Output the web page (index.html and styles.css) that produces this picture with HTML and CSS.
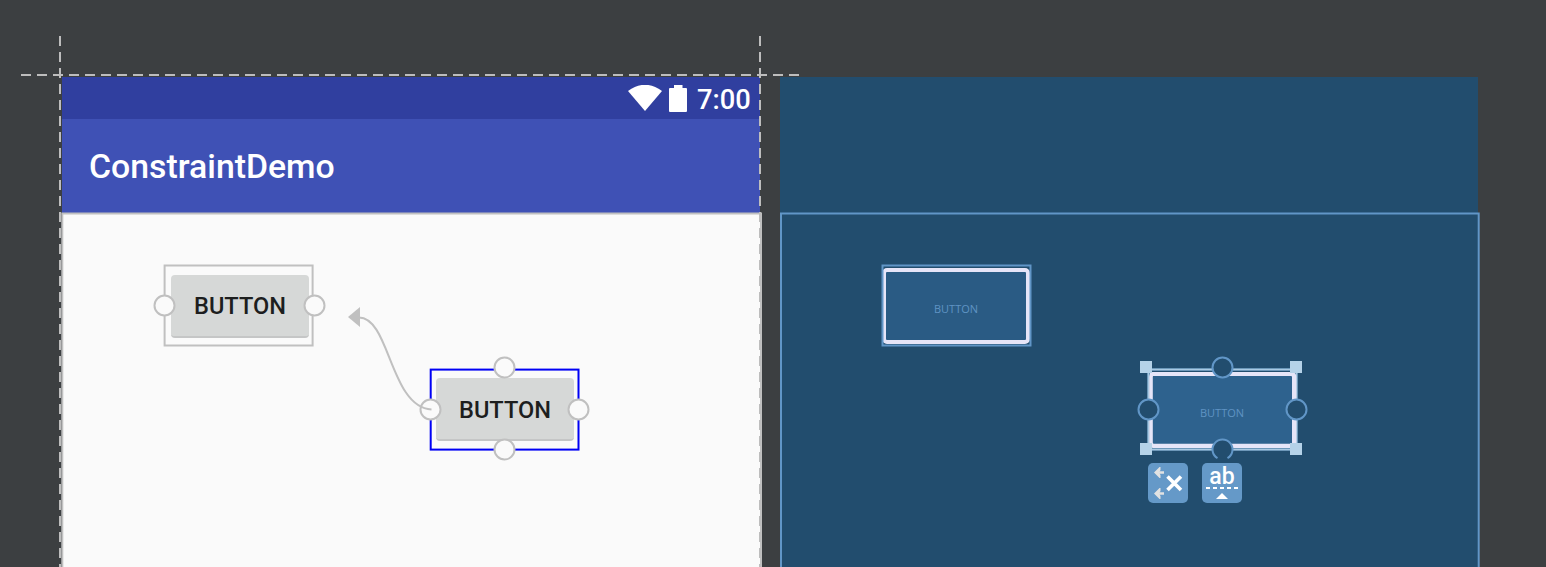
FILE: index.html
```
<!DOCTYPE html>
<html lang="en">
<head>
<meta charset="utf-8">
<title>ConstraintDemo</title>
<link rel="stylesheet" href="styles.css">
</head>
<body>
<main class="editor">
  <section class="surface design">
    <div class="status-bar">
      <svg class="wifi" width="34" height="27" viewBox="0 0 34 27"><path d="M0 6Q17-6.500 34 6L17 26Z"/></svg>
      <svg class="battery" width="18" height="27" viewBox="0 0 18 27"><path d="M5 0H13.500V3H17Q18 3 18 4V26Q18 27 17 27H1Q0 27 0 26V4Q0 3 1 3H5Z"/></svg>
      <span class="clock">7:00</span>
    </div>
    <div class="app-bar"><h1>ConstraintDemo</h1></div>
    <div class="content"></div>
    <div class="widget first">BUTTON</div>
    <div class="widget second">BUTTON</div>
  </section>
  <section class="surface blueprint">
    <div class="content"></div>
    <div class="outline first">BUTTON</div>
    <div class="outline second">BUTTON</div>
  </section>
  <svg class="overlay" width="1546" height="567" viewBox="0 0 1546 567">
    <g class="frames">
      <path class="gray" d="M62.300 567V213.400H761V567"/>
      <path class="blue" d="M781 567V213.400H1478.700V567"/>
    </g>
    <g class="guides">
      <path d="M21 75H800M60 36V567M760 36V567"/>
    </g>
    <g class="anchors">
      <rect class="gray" x="164.600" y="265.500" width="148" height="80"/>
      <circle cx="164.500" cy="305.500" r="10"/>
      <circle cx="314.500" cy="305.500" r="10"/>
      <rect class="selected" x="430.700" y="369.600" width="147.800" height="80"/>
      <circle cx="504.500" cy="367.500" r="10"/>
      <circle cx="504.500" cy="449.500" r="10"/>
      <circle cx="430.500" cy="409.500" r="10"/>
      <circle cx="578.500" cy="409.500" r="10"/>
      <path class="connector" d="M431.500 409.500C390 407 390 317.500 359 317.500"/>
      <path class="arrow" d="M348 317L360 307V327Z"/>
    </g>
    <g class="handles">
      <rect class="blue" x="882.500" y="265.500" width="148" height="80"/>
      <rect class="halo" x="1148.500" y="369.500" width="148" height="80"/>
      <rect class="core" x="1148.500" y="369.500" width="148" height="80"/>
      <rect class="body-edge" x="1151" y="373.700" width="143.500" height="71.800" rx="3"/>
      <path class="corners" d="M1140 361h12v12h-12zM1290 361h12v12h-12zM1140 443h12v12h-12zM1290 443h12v12h-12z"/>
      <circle cx="1222.500" cy="367.500" r="10"/>
      <path class="anchor-fill" d="M1217.500 458.700A10 10 0 1 1 1227.500 458.700Z"/>
      <path class="anchor-ring" d="M1217.500 458.200A10 10 0 1 1 1227.500 458.200"/>
      <circle cx="1148.500" cy="409.500" r="10"/>
      <circle cx="1296.500" cy="409.500" r="10"/>
    </g>
  </svg>
  <div class="actions">
    <button class="action" aria-label="Delete constraints">
      <svg width="40" height="40" viewBox="0 0 40 40"><g class="side"><path d="M8 9.500H16M8 30.500H16"/><path class="head" d="M6 9.500L11.500 4H12.500V7L11 9.500L12.500 12V15H11.500ZM6 30.500L11.500 25H12.500V28L11 30.500L12.500 33V36H11.500Z"/></g><path class="cross" d="M19.500 13.500L33 27M33 13.500L19.500 27"/></svg>
    </button>
    <button class="action" aria-label="Edit baseline">
      <span class="ab">ab</span>
      <svg width="40" height="40" viewBox="0 0 40 40"><path class="baseline" d="M4 25H36"/><path class="tip" d="M14 36L20 30L26 36Z"/></svg>
    </button>
  </div>
</main>
</body>
</html>
```
FILE: styles.css
```
* { box-sizing: border-box; }
body {
  margin: 0;
  background: #3c3f41;
  font-family: Roboto, sans-serif;
  overflow: hidden;
}
.editor {
  position: relative;
  display: flex;
  gap: 20px;
  width: 1546px;
  height: 567px;
  padding: 77px 0 0 62px;
}
.surface {
  position: relative;
  display: flex;
  flex-direction: column;
  width: 698px;
  height: 490px;
}
.status-bar {
  display: flex;
  align-items: flex-start;
  height: 42px;
  padding: 8px 9px 0 0;
  justify-content: flex-end;
  background: #303f9f;
  color: #fff;
  fill: #fff;
}
.wifi { margin-right: 7px; }
.battery { margin-right: 10px; }
.clock {
  width: 54px;
  font-size: 27.3px;
  font-weight: 500;
  line-height: 30px;
  white-space: nowrap;
}
.app-bar {
  display: flex;
  align-items: center;
  height: 94px;
  padding: 2px 0 0 27px;
  background: #3f51b5;
}
.app-bar h1 {
  margin: 0;
  color: #fff;
  font-size: 33.8px;
  font-weight: 500;
  line-height: 40px;
}
.design .content { flex: 1; background: #fafafa; }
.blueprint { background: #224d6e; }
.widget, .outline {
  position: absolute;
  display: flex;
  align-items: center;
  justify-content: center;
}
.widget {
  width: 138px;
  height: 63px;
  border-radius: 4px;
  background: #d6d8d7;
  border-bottom: 2px solid #c5c6c6;
  color: #1d1e1e;
  font-size: 23.6px;
  font-weight: 500;
}
.widget.first { left: 109px; top: 198px; }
.widget.second { left: 374px; top: 301px; padding-top: 2px; }
.outline {
  width: 148px;
  height: 76px;
  padding-top: 5px;
  border: 4px solid #e6e5f8;
  border-radius: 5px;
  background: #2a5b84;
  color: #5f93c3;
  font: 11px "Open Sans", sans-serif;
}
.outline.first { left: 102px; top: 191px; }
.outline.second { left: 368px; top: 295px; background: #2e628e; }
.overlay { position: absolute; left: 0; top: 0; fill: none; stroke-width: 2; }
.guides { stroke: #bdbdbd; stroke-dasharray: 10 6; }
.gray { stroke: #c0c0c0; }
.blue { stroke: #6196c7; }
.selected { stroke: #0000f5; }
.anchors circle { fill: #fafafa; stroke: #c0c0c0; }
.connector { stroke: #c0c0c0; }
.arrow { fill: #c0c0c0; }
.halo { stroke: #6692b5; stroke-width: 3; }
.core { stroke: #a9c9e2; stroke-width: 1.2; }
.body-edge { stroke: #e6e5f8; stroke-width: 3.6; }
.corners { fill: #b5d2e8; }
.handles circle { fill: #224d6e; stroke: #6196c7; }
.anchor-fill { fill: #224d6e; }
.anchor-ring { stroke: #6196c7; }
.actions {
  position: absolute;
  left: 1148px;
  top: 463px;
  display: flex;
  gap: 14px;
}
.action {
  position: relative;
  width: 40px;
  height: 40px;
  padding: 0;
  border: 0;
  border-radius: 5px;
  background: #6599c8;
  color: #fff;
}
.action svg { display: block; fill: none; }
.ab {
  position: absolute;
  left: 0;
  top: 0;
  width: 40px;
  font: 500 23px/28px Roboto, sans-serif;
  text-align: center;
}
.side { stroke: #e2e2e2; stroke-width: 2.4; }
.side .head { fill: #e2e2e2; stroke: none; }
.cross { stroke: #fff; stroke-width: 3.6; }
.baseline { stroke: #fff; stroke-width: 2; stroke-dasharray: 4 3; }
.tip { fill: #fff; }
```
